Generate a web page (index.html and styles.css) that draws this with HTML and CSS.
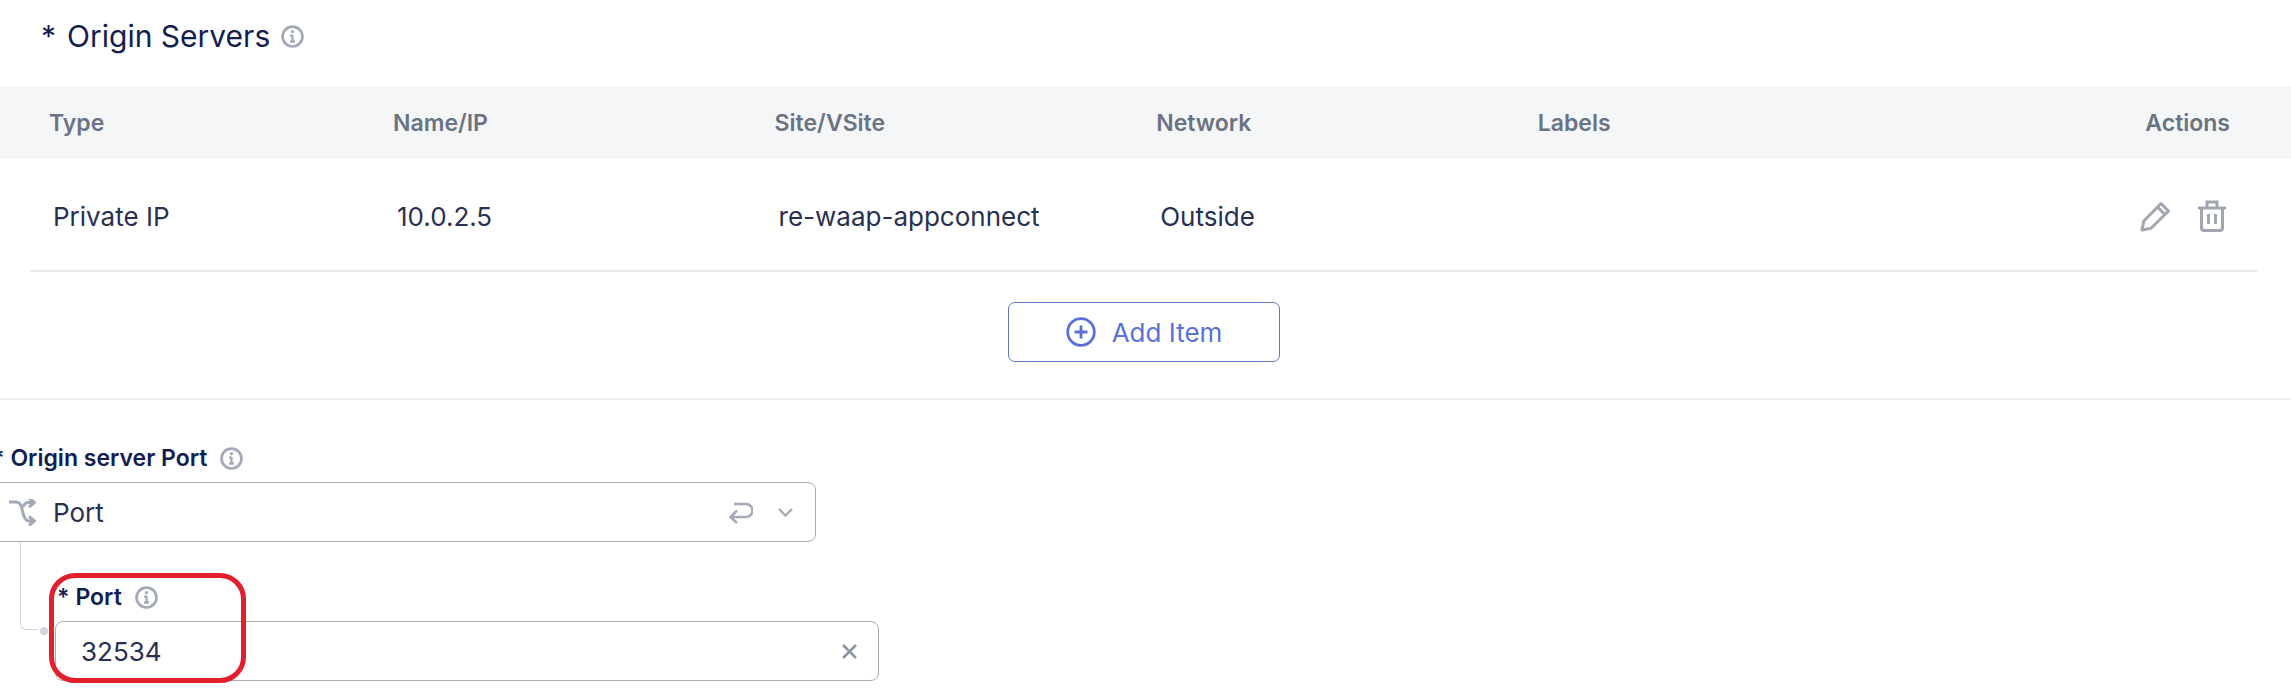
FILE: index.html
```html
<!doctype html>
<html lang="en">
<head>
    <meta charset="UTF-8">
    <title>Origin Servers</title>
    <link rel="stylesheet" href="styles.css">
</head>
<body>
    <svg class="sprites" width="0" height="0">
        <symbol id="info" viewBox="0 0 24 24">
            <circle cx="12" cy="12" r="10.4" fill="none" stroke="currentColor" stroke-width="2.8"/>
            <path d="M12 10.5v6.500M9.500 10.800h2.500M9.500 17.200h5" fill="none" stroke="currentColor" stroke-width="2.400"/>
            <circle cx="12" cy="7" r="1.700" fill="currentColor"/>
        </symbol>
    </svg>

    <h2 class="title"><span class="star">*</span> Origin Servers <svg class="info info-lg"><use href="#info"/></svg></h2>

    <div class="grid-row grid-head">
        <div>Type</div>
        <div>Name/IP</div>
        <div>Site/VSite</div>
        <div>Network</div>
        <div>Labels</div>
        <div class="actions">Actions</div>
    </div>
    <div class="grid-row grid-body">
        <div>Private IP</div>
        <div>10.0.2.5</div>
        <div>re-waap-appconnect</div>
        <div>Outside</div>
        <div></div>
        <div class="actions">
            <svg class="act" viewBox="0 0 30 32">
                <path d="M2 30l1.800-9L21 3.500l7.500 7.500L11 28.200zM17.500 7l7.500 7.500" fill="none" stroke="currentColor" stroke-width="3" stroke-linejoin="round"/>
            </svg>
            <svg class="act" viewBox="0 0 30 32">
                <path d="M1 8h28M10 8V2h10v6M4.500 8v20a2.500 2.500 0 0 0 2.500 2.500h16a2.500 2.500 0 0 0 2.500-2.500V8M11.500 14v10M18.500 14v10" fill="none" stroke="currentColor" stroke-width="3"/>
            </svg>
        </div>
    </div>

    <div class="add-wrap">
        <button class="add-btn">
            <svg class="add-icon" viewBox="0 0 30 30">
                <circle cx="15" cy="15" r="13.300" fill="none" stroke="currentColor" stroke-width="2.800"/>
                <path d="M15 8.500v13M8.500 15h13" fill="none" stroke="currentColor" stroke-width="2.800"/>
            </svg>
            Add Item
        </button>
    </div>

    <section class="port-section">
        <label class="field-label first-label"><span class="req">*</span> Origin server Port <svg class="info"><use href="#info"/></svg></label>
        <div class="box select-box">
            <svg class="route" viewBox="0 0 27 27">
                <path d="M0 3h7c3 0 4.500 2 5.500 5l2 8c1 3 2.500 6 5.500 6h5M14 8c1-3 3-4.500 6-4.500h5M20 -1l5.500 4.500-5.500 4.500M20 17.500l5.500 4.500-5.500 4.500" fill="none" stroke="currentColor" stroke-width="3"/>
            </svg>
            <span class="value">Port</span>
            <svg class="enter" viewBox="0 0 24 23">
                <path d="M5 3h12a6 6 0 0 1 0 13H2M8 9.500L1.500 16 8 22" fill="none" stroke="currentColor" stroke-width="2.600"/>
            </svg>
            <svg class="chev" viewBox="0 0 15 9">
                <path d="M1 1l6.500 6.500L14 1" fill="none" stroke="currentColor" stroke-width="2.400"/>
            </svg>
        </div>
        <div class="sub-field">
            <i class="tree"></i>
            <i class="tree-dot"></i>
            <label class="field-label"><span class="req">*</span> Port <svg class="info"><use href="#info"/></svg></label>
            <div class="box input-box">
                <span class="value">32534</span>
                <svg class="clear" viewBox="0 0 15 15">
                    <path d="M1 1l13 13M14 1L1 14" fill="none" stroke="currentColor" stroke-width="2.600"/>
                </svg>
            </div>
            <div class="callout"></div>
        </div>
    </section>
</body>
</html>
```

FILE: styles.css
```css
*{
    margin: 0;
    padding: 0;
    box-sizing: border-box;
}
html,body{
    height: 689px;
    overflow: hidden;
    background: #fff;
}
body{
    font-family: Inter, "Liberation Sans", sans-serif;
    color: #1d2547;
}
.sprites{
    position: absolute;
}
.title{
    height: 86px;
    padding: 0 0 14px 41px;
    font-size: 30px;
    line-height: 32px;
    font-weight: 400;
    color: #131d50;
    display: flex;
    align-items: center;
}
.star{
    margin-right: 11px;
}
.info{
    width: 23px;
    height: 23px;
    color: #a3a9b6;
    margin-left: 13px;
    flex: none;
}
.info-lg{
    margin-left: 11px;
}
.grid-row{
    display: grid;
    grid-template-columns: 344px repeat(4, 381.6px) 1fr;
    align-items: center;
}
.grid-head{
    height: 73px;
    padding: 0 61px 0 49px;
    background: #f5f6f8;
    font-size: 23px;
    font-weight: 600;
    color: #6a7383;
}
.grid-body{
    height: 113px;
    margin: 0 34px 0 30px;
    padding: 3px 30px 0 23px;
    border-bottom: 2px solid #e6e7eb;
    font-size: 26px;
    color: #283052;
}
.actions{
    display: flex;
    justify-content: flex-end;
    gap: 27px;
}
.act{
    width: 30px;
    height: 32px;
    color: #a0a5b0;
}
.add-wrap{
    height: 128px;
    display: flex;
    justify-content: center;
    padding: 30px 3px 0 0;
    border-bottom: 2px solid #eceef0;
}
.add-btn{
    width: 272px;
    height: 60px;
    background: #fff;
    border: 1.5px solid #6476c4;
    border-radius: 7px;
    color: #5a70d8;
    font: 400 26px Inter, "Liberation Sans", sans-serif;
    display: flex;
    align-items: center;
    justify-content: center;
    gap: 16px;
}
.add-icon{
    width: 30px;
    height: 30px;
}
.port-section{
    padding-top: 44px;
}
.field-label{
    font-size: 23px;
    line-height: 28px;
    font-weight: 600;
    color: #131d50;
    display: flex;
    align-items: center;
    height: 28px;
}
.req{
    margin-right: 6px;
}
.first-label{
    margin-left: -8px;
}
.box{
    height: 60px;
    border: 1.5px solid #a9abb0;
    border-radius: 8px;
    display: flex;
    align-items: center;
    background: #fff;
}
.select-box{
    width: 836px;
    margin: 10px 0 0 -20px;
    padding: 0 22px 0 28px;
}
.route{
    width: 27px;
    height: 27px;
    color: #a3a9b6;
    margin-right: 17px;
}
.value{
    font-size: 26px;
    color: #283052;
    flex: 1;
}
.enter{
    width: 24px;
    height: 23px;
    color: #a3a9b6;
    margin-right: 25px;
}
.chev{
    width: 15px;
    height: 9px;
    color: #a3a9b6;
}
.sub-field{
    position: relative;
    margin: 41px 0 0 55px;
    width: 824px;
}
.sub-field .field-label{
    margin-left: 2px;
}
.input-box{
    margin-top: 10px;
    padding: 0 21px 0 25px;
}
.clear{
    width: 15px;
    height: 15px;
    color: #8d94a3;
}
.tree{
    position: absolute;
    left: -35px;
    top: -41px;
    width: 18px;
    height: 88px;
    border-left: 1.5px solid #d4d6db;
    border-bottom: 1.5px solid #d4d6db;
    border-bottom-left-radius: 6px;
}
.tree-dot{
    position: absolute;
    left: -15px;
    top: 44px;
    width: 8px;
    height: 8px;
    border-radius: 50%;
    background: #d4d7e0;
}
.callout{
    position: absolute;
    left: -6px;
    top: -10px;
    width: 197px;
    height: 110px;
    border: 5px solid #e1202c;
    border-radius: 26px;
}
```
